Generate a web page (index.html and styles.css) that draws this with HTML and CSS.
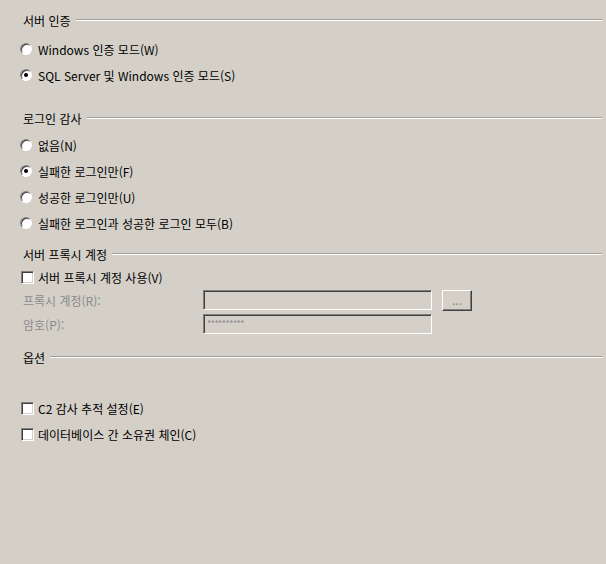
FILE: index.html
```html
<!DOCTYPE html>
<html lang="ko">
<head>
    <meta charset="UTF-8">
    <title>보안</title>
    <link rel="stylesheet" href="styles.css">
</head>
<body>
    <div class="page">
        <div class="section auth">
            <div class="group-title"><span>서버 인증</span><div class="rule"></div></div>
            <label class="row"><span class="radio"></span>Windows 인증 모드(W)</label>
            <label class="row"><span class="radio checked"></span>SQL Server 및 Windows 인증 모드(S)</label>
        </div>

        <div class="section audit">
            <div class="group-title"><span>로그인 감사</span><div class="rule"></div></div>
            <label class="row"><span class="radio"></span>없음(N)</label>
            <label class="row"><span class="radio checked"></span>실패한 로그인만(F)</label>
            <label class="row"><span class="radio"></span>성공한 로그인만(U)</label>
            <label class="row"><span class="radio"></span>실패한 로그인과 성공한 로그인 모두(B)</label>
        </div>

        <div class="section proxy">
            <div class="group-title"><span>서버 프록시 계정</span><div class="rule"></div></div>
            <label class="row short"><span class="check"></span>서버 프록시 계정 사용(V)</label>
            <div class="field-row">
                <span class="field-label">프록시 계정(R):</span>
                <div class="textbox"></div>
                <div class="browse">...</div>
            </div>
            <div class="field-row">
                <span class="field-label">암호(P):</span>
                <div class="textbox password">**********</div>
            </div>
        </div>

        <div class="section options">
            <div class="group-title"><span>옵션</span><div class="rule"></div></div>
            <label class="row"><span class="check"></span>C2 감사 추적 설정(E)</label>
            <label class="row"><span class="check"></span>데이터베이스 간 소유권 체인(C)</label>
        </div>
    </div>
</body>
</html>
```

FILE: styles.css
```css
body {
    margin: 0;
    background: #d4d0c8;
    font-family: "Noto Sans CJK KR", "DejaVu Sans", sans-serif;
    font-size: 12px;
    color: #000000;
}
.page {
    width: 606px;
    height: 564px;
    padding: 12px 4px 0 21px;
    box-sizing: border-box;
}
.group-title {
    display: flex;
    align-items: center;
    height: 16px;
    margin-left: 2px;
}
.group-title span {
    margin-right: 5px;
}
.rule {
    flex: 1;
    border-top: 1px solid #a09d96;
    border-bottom: 1px solid #ffffff;
}
.row {
    display: flex;
    align-items: center;
    height: 26px;
}
.row.short {
    height: 22px;
}
.auth .group-title {
    margin-bottom: 8px;
}
.audit {
    margin-top: 22px;
}
.audit .group-title {
    margin-bottom: 6px;
}
.proxy {
    margin-top: 10px;
}
.proxy .group-title {
    margin-bottom: 4px;
}
.options {
    margin-top: 13px;
}
.options .group-title {
    margin-bottom: 30px;
}
.radio {
    width: 12px;
    height: 12px;
    box-sizing: border-box;
    border-radius: 50%;
    background: #ffffff;
    border: 1px solid;
    border-color: #808080 #ffffff #ffffff #808080;
    box-shadow: inset 1px 1px 0 #404040;
    margin-right: 6px;
    margin-left: -1px;
    display: flex;
    align-items: center;
    justify-content: center;
}
.radio.checked::after {
    content: "";
    width: 4px;
    height: 4px;
    border-radius: 50%;
    background: #000000;
}
.check {
    width: 13px;
    height: 13px;
    box-sizing: border-box;
    background: #ffffff;
    border: 1px solid;
    border-color: #808080 #ffffff #ffffff #808080;
    box-shadow: inset 1px 1px 0 #404040, inset -1px -1px 0 #d4d0c8;
    margin-right: 4px;
}
.field-row {
    display: flex;
    align-items: center;
    height: 24px;
}
.field-label {
    width: 180px;
    margin-left: 2px;
    color: #8a8a8a;
}
.textbox {
    width: 229px;
    height: 20px;
    box-sizing: border-box;
    border: 1px solid;
    border-color: #808080 #ffffff #ffffff #808080;
    box-shadow: inset 1px 1px 0 #404040, inset -1px -1px 0 #d4d0c8;
    padding: 0 3px;
    line-height: 18px;
    color: #8a8a8a;
    font-size: 9px;
    letter-spacing: -0.5px;
}
.browse {
    width: 30px;
    height: 21px;
    box-sizing: border-box;
    margin-left: 10px;
    border: 1px solid;
    border-color: #ffffff #404040 #404040 #ffffff;
    box-shadow: inset -1px -1px 0 #808080;
    text-align: center;
    line-height: 17px;
    color: #8a8a8a;
}
```
